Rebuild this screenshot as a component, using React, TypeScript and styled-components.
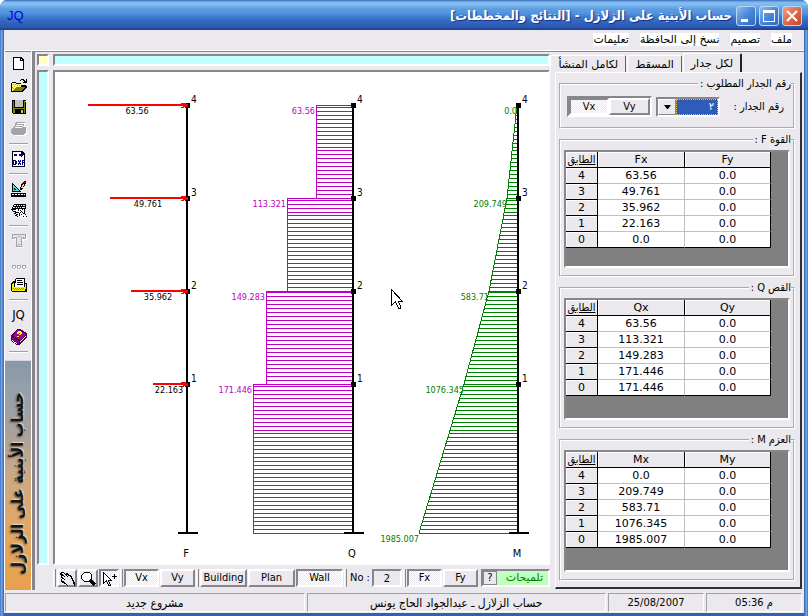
import React from "react";
import styled, { createGlobalStyle, css } from "styled-components";

const face = "#ebe9ed";
const shade = "#86868c";
const line = "#a0a0a6";
const cyan = "#c0ffff";
const violet = "#c000c0";
const green = "#008000";
const uiFont = '"DejaVu Sans Condensed", "DejaVu Sans", sans-serif';
const wideFont = '"DejaVu Sans", sans-serif';

const GlobalStyle = createGlobalStyle`
  * { box-sizing: border-box; }
  body { margin: 0; background: #fff; font: 11px/14px ${uiFont}; color: #000; }
  button, input, select { font: inherit; color: inherit; margin: 0; }
`;

const sunken = css`
  border: 2px solid;
  border-color: ${shade} #fff #fff ${shade};
`;
const dither = css`
  background: repeating-conic-gradient(#fff 0 25%, ${face} 0 50%) 0 0 / 2px 2px;
`;

const Window = styled.div`
  display: flex;
  flex-direction: column;
  min-height: 100vh;
  padding: 0 4px 4px;
  border-radius: 7px 7px 0 0;
  background: linear-gradient(90deg, #2450a8 0, #7cb0ea 1px, #4c80cc 3px, #3260b4 4px, #3260b4 calc(100% - 4px), #4c80cc calc(100% - 3px), #7cb0ea calc(100% - 1px), #2450a8 100%);
`;

const TitleBar = styled.header`
  display: flex;
  align-items: center;
  height: 30px;
  margin: 0 -4px;
  padding: 2px 6px 0 7px;
  border-radius: 7px 7px 0 0;
  background: linear-gradient(#3c6cb8 0, #78b4ec 2px, #86c0f0 4px, #5c9ce4 9px, #5494e0 13px, #3c7ccc 17px, #3468c0 21px, #2c58b0 27px, #1c3c90 30px);
`;
const AppMark = styled.span`
  color: #0000e8;
  font: 13px/16px "Liberation Sans", sans-serif;
`;
const Title = styled.h1`
  flex: 1;
  margin: 0 4px 0 0;
  color: #fff;
  font: bold 13px/20px ${uiFont};
  text-shadow: 1px 1px 1px #10308c;
`;
const WindowButtons = styled.div`
  display: flex;
  gap: 3px;
`;
const WindowButton = styled.button<{ $close?: boolean }>`
  display: grid;
  place-items: center;
  width: 20px;
  height: 20px;
  padding: 0;
  border: 1px solid #b8d8f8;
  border-radius: 3px;
  background: ${(p) =>
    p.$close
      ? "linear-gradient(135deg, #f0a088, #e06848 50%, #c84828)"
      : "linear-gradient(135deg, #90bcf0, #4888d8 50%, #3068c0)"};
`;

const MenuBar = styled.nav`
  display: flex;
  gap: 11px;
  height: 20px;
  padding: 3px 12px 0 0;
  background: ${face};
`;
const MenuItem = styled.button`
  height: 13px;
  padding: 0;
  border: 0;
  background: #fff;
  font: 11px/13px ${wideFont};
`;

const Body = styled.main`
  display: flex;
  flex: 1;
  background: ${face};
  border-top: 1px solid #fff;
  box-shadow: inset 0 1px 0 ${shade};
`;

const ToolColumn = styled.div`
  display: flex;
  flex-direction: column;
  width: 30px;
  padding-top: 1px;
  border-left: 1px solid #fff;
  border-right: 2px solid ${shade};
  box-shadow: inset -1px 0 0 #fff;
`;
const ToolButton = styled.button`
  display: grid;
  place-items: center;
  height: 22px;
  padding: 0;
  border: 0;
  background: none;
  font: 13px/16px ${uiFont};
`;
const ToolRule = styled.hr`
  width: 19px;
  height: 2px;
  margin: 3px auto;
  border: 0;
  border-top: 1px solid ${line};
  background: #fff;
`;
const Banner = styled.div`
  display: flex;
  flex: 1;
  align-items: center;
  justify-content: center;
  width: 26px;
  margin-top: 4px;
  padding-top: 16px;
  border-top: 1px solid #d8d8dc;
  background: linear-gradient(#8898a8 0, #94a0aa 12%, #a8a09c 30%, #c8a888 48%, #e0a868 70%, #e8a04c 100%);
`;
const BannerText = styled.span`
  writing-mode: vertical-rl;
  transform: rotate(180deg);
  white-space: nowrap;
  color: #141410;
  font: bold 16px/24px ${uiFont};
  text-shadow: -1px -1px 2px #504840, 1px 1px 1px #e8dccc;
`;

const Workspace = styled.section`
  display: grid;
  flex: 1;
  grid-template-columns: 12px minmax(0, 1fr);
  grid-template-rows: 12px minmax(0, 1fr) 18px;
  gap: 4px;
  min-width: 0;
  padding: 3px 5px 3px 2px;
  border-left: 1px solid ${shade};
`;
const Strip = styled.div<{ $color: string }>`
  ${sunken}
  background: ${(p) => p.$color};
`;
const Canvas = styled.div`
  ${sunken}
  display: flex;
  min-height: 494px;
  background: #fff;
`;
const Chart = styled.svg`
  flex: 1;
  align-self: stretch;
  min-width: 0;
  font: 9px ${uiFont};
`;

const Commands = styled.div`
  display: flex;
  grid-column: 2;
  gap: 1px;
  align-items: stretch;
`;
const Grip = styled.span`
  width: 3px;
  border-right: 1px solid ${shade};
  border-left: 1px solid #fff;
`;
const CommandButton = styled.button<{ $w: number; $on?: boolean }>`
  display: grid;
  place-items: center;
  width: ${(p) => p.$w}px;
  padding: 0;
  border: 2px solid;
  border-color: #fff ${shade} ${shade} #fff;
  background: ${face};
  ${(p) => p.$on && css`
    border-color: ${shade} #fff #fff ${shade};
    ${dither}
  `}
`;
const NumberLabel = styled.label`
  display: flex;
  align-items: center;
  gap: 2px;
  padding-left: 2px;
  white-space: nowrap;
`;
const NumberBox = styled.input`
  ${sunken}
  width: 30px;
  height: 18px;
  padding: 0;
  background: ${face};
  text-align: center;
`;
const Hint = styled.div`
  ${sunken}
  display: flex;
  flex: 1;
  margin-left: 2px;
  background: #c0ffc0;
  color: ${green};
`;
const HintButton = styled.button`
  width: 14px;
  padding: 0;
  border: 1px solid ${shade};
  background: ${face};
  color: #000;
  line-height: 12px;
`;
const HintText = styled.span`
  flex: 1;
  padding-right: 5px;
  font: 11px/14px ${wideFont};
  text-align: right;
`;

const Side = styled.aside`
  display: flex;
  flex-direction: column;
  width: 249px;
  padding: 2px 0 0;
`;
const Tabs = styled.div`
  display: flex;
  align-items: flex-end;
  gap: 1px;
  height: 19px;
  padding-right: 62px;
`;
const Tab = styled.button<{ $on?: boolean }>`
  height: ${(p) => (p.$on ? 19 : 17)}px;
  padding: 1px 7px 0;
  border: 0;
  border-top: 1px solid #fff;
  border-left: 1px solid #fff;
  border-right: ${(p) => (p.$on ? "2px solid #202020" : "1px solid #606060")};
  border-radius: 3px 2px 0 0;
  background: ${face};
  font: 11px/14px ${wideFont};
  white-space: nowrap;
`;
const Page = styled.div`
  display: flex;
  flex: 1;
  flex-direction: column;
  gap: 4px;
  margin: 0 2px 1px 0;
  padding: 4px 5px 6px 3px;
  border: solid;
  border-width: 1px 2px 2px 1px;
  border-color: #fff #303030 #303030 #fff;
`;
const Group = styled.fieldset`
  min-width: 0;
  margin: 0;
  padding: 3px 3px 7px;
  border: 2px groove #fff;
`;
const Caption = styled.legend`
  height: 14px;
  margin: 0 -1px;
  padding: 0 0 0 2px;
  white-space: nowrap;
`;
const WallRow = styled.div`
  display: flex;
  align-items: center;
  padding: 2px 6px 3px 3px;
  white-space: nowrap;
`;
const ComboLabel = styled.label`
  flex: 1;
`;
const Combo = styled.div`
  ${sunken}
  display: flex;
  width: 64px;
  height: 20px;
  direction: ltr;
`;
const ComboArrow = styled.span`
  display: grid;
  place-items: center;
  width: 18px;
  border: 1px solid;
  border-color: #fff ${shade} ${shade} #fff;
`;
const ComboSelect = styled.select`
  flex: 1;
  min-width: 0;
  padding: 0 3px;
  appearance: none;
  border: 1px dotted #e8c060;
  border-radius: 0;
  background: #2f5cb8;
  color: #fff;
  direction: rtl;
`;
const PairFrame = styled.div`
  ${sunken}
  display: flex;
  width: 85px;
  height: 21px;
  margin-right: 4px;
  direction: ltr;
`;
const GridFrame = styled.div<{ $h: number }>`
  ${sunken}
  height: ${(p) => p.$h}px;
  background: #808080;
  direction: ltr;
`;
const Table = styled.table`
  width: 205px;
  border-collapse: separate;
  border-spacing: 0;
  table-layout: fixed;
  text-align: center;
  font: 11px/15px ${wideFont};
`;
const HeadCell = styled.th<{ $w?: number }>`
  width: ${(p) => (p.$w ? p.$w + "px" : "auto")};
  height: 16px;
  padding: 0;
  border-right: 1px solid #000;
  border-bottom: 1px solid #000;
  background: ${face};
  box-shadow: inset 1px 1px 0 #fff;
  font-weight: normal;
`;
const FloorHead = styled.span`
  font: 11px/14px ${uiFont};
  text-decoration: underline;
`;
const Cell = styled.td<{ $end?: boolean; $last?: boolean }>`
  height: 16px;
  padding: 0;
  border-right: 1px solid ${(p) => (p.$end ? "#000" : "#c0c0c0")};
  border-bottom: 1px solid ${(p) => (p.$last ? "#000" : "#c0c0c0")};
  background: #fff;
`;

const StatusBar = styled.footer`
  display: flex;
  gap: 2px;
  padding: 3px 2px 1px 1px;
  background: ${face};
  text-align: center;
`;
const Pane = styled.div<{ $w?: number }>`
  flex: ${(p) => (p.$w ? `0 0 ${p.$w}px` : "1")};
  padding: 1px 0 0;
  border: 1px solid;
  border-color: ${line} #fff #fff ${line};
  font-size: ${(p) => (p.$w ? 11 : 12)}px;
  line-height: 16px;
`;

const Icon = ({ children, size = 16 }: { children: React.ReactNode; size?: number }) => (
  <svg width={size} height={size} viewBox={`0 0 ${size} ${size}`} shapeRendering="crispEdges" aria-hidden="true">
    {children}
  </svg>
);

const NewIcon = () => (
  <Icon>
    <path d="M2 2h8l3 3v10H2z" fill="#000" />
    <path d="M3 3h6v3h3v8H3z" fill="#fff" />
    <path d="M10 4h1v1h-1z" fill="#fff" />
  </Icon>
);
const OpenIcon = () => (
  <Icon>
    <path d="M0 6h1V5h4v1h5v2h5v1h1v1l-5 5H0z" fill="#000" />
    <path d="M1 6h4v1h5v3H5l-4 4z" fill="#ffff80" />
    <path d="M2 7h1v1H2zM4 7h1v1H4zM6 8h1v1H6zM8 8h1v1H8zM3 9h1v1H3zM1 10h1v1H1zM2 11h1v1H2z" fill="#c0a000" />
    <path d="M5 10h9l-4 4H2z" fill="#808000" />
    <path d="M9 3h1V2h3v1h1v1h1V2h1v4h-4V5h1V4h-1V3h-2v1H9z" fill="#000" />
  </Icon>
);
const SaveIcon = () => (
  <Icon>
    <path d="M1 1h14v14H2l-1-1z" fill="#000" />
    <path d="M2 2h12v12H2z" fill="#808000" />
    <path d="M4 1h8v7H4z" fill="#c0c0c0" />
    <path d="M3 2h1v6h8V2h1v7H3zM4 10h9v5H4z" fill="#000" />
    <path d="M10 11h2v3h-2z" fill="#c0c0c0" />
    <path d="M14 2h1v1h-1z" fill="#fff" />
  </Icon>
);
const PrintIcon = () => (
  <Icon>
    <path d="M5 2h10l-2 5h2l1 1v5l-3 2H3l-3-3V9l3-2z" fill="#fff" />
    <path d="M5 1h9l-2 5h2l1 1v4l-3 3H3l-3-2V8l3-2z" fill="#a4a4a8" />
    <path d="M6 2h7l-1 1H6zM5 4h7v1H5zM4 6h7v1H4z" fill="#fff" />
  </Icon>
);
const DxfIcon = () => (
  <Icon>
    <path d="M1 0h10l3 3v13H1z" fill="#000" />
    <path d="M2 1h8v3h3v11H2z" fill="#fff" />
    <path d="M2 4l2-2v1h2v2H4v1zM12 4l-2-2v1H8v2h2v1zM3 9h2v1h1v3H5v1H2V9zM3 10v3h1v-3zM7 9h1v1h1V9h1v2H9v1h1v2H9v-1H8v1H7v-2h1v-1H7zM11 9h3v1h-2v1h1v1h-1v2h-1z" fill="#000090" fillRule="evenodd" />
  </Icon>
);
const DraftIcon = () => (
  <Icon>
    <path d="M1 1l9 10H1z" fill="#000" />
    <path d="M2 4l6 6H2z" fill="#40e0e0" />
    <path d="M3 7l2 2H3z" fill="#000" />
    <path d="M0 12h15v4H0z" fill="#000" />
    <path d="M1 13h13v1H1z" fill="#fff" />
    <path d="M3 13h1v1H3zM6 13h1v1H6zM9 13h1v1H9zM12 13h1v1h-1z" fill="#000" />
    <path d="M9 9V7l2-5 2-2h2v2l-4 7z" fill="#000" />
    <path d="M10 7l2-4h1v1l-2 4z" fill="#ffe840" />
    <path d="M13 1h2v1h-2z" fill="#900" />
  </Icon>
);
const SectionIcon = () => (
  <Icon>
    <path d="M3 1h12v5H1V4h1V2h1z" fill="#000" />
    <path d="M3 2h2v1H3zM6 2h1v1H6zM8 2h1v1H8zM10 2h1v1h-1zM12 2h2v1h-2zM2 4h2v1H2zM5 4h1v1H5zM7 4h1v1H7zM9 4h1v1H9zM11 4h3v1h-3z" fill="#ffffa0" />
    <path d="M2 6h12v7h2v2h-4l-8-4z" fill="#fff" />
    <path d="M0 6h5v1H0zM1 7h1v1h3v1H2V8H1zM4 9h4v1H4zM3 10h2v1H3zM5 11h2v1H5zM4 12h2v1H4zM6 13h1v1H6zM8 10h1v3H8zM7 6h1v2H7zM9 7h1v1H9zM10 8h1v1h-1zM9 9h1v1H9zM11 9h1v1h-1zM10 11h1v1h-1zM12 10h1v1h-1zM13 6h1v5h-1zM14 11h1v1h-1zM12 13h1v1h-1zM15 13h1v1h-1zM11 6h1v1h-1z" fill="#000" />
  </Icon>
);
const TextIcon = () => (
  <Icon>
    <path d="M2 2h14v5h-3v1h-2v7H6V8H4V7H2z" fill="#fff" />
    <path d="M1.5 1.5h13v4h-2v-1h-2v9h-5v-9h-2v1h-2z" fill="#e4e4e8" stroke="#a4a4a8" />
    <path d="M7 3h2v1H7zM7 11h2v1H7z" fill="#a4a4a8" />
  </Icon>
);
const DotsIcon = () => (
  <Icon>
    {[1, 6, 11].map((x) => (
      <g key={x}>
        <path d={`M${x + 1} 11h3v4h-3z`} fill="#fff" />
        <path d={`M${x} 10h4v1h-4zM${x} 11h1v2h-1zM${x + 3} 11h1v2h-1zM${x + 1} 13h2v1h-2z`} fill="#a4a4a8" />
      </g>
    ))}
  </Icon>
);
const ReportIcon = () => (
  <Icon>
    <path d="M5 1h9v5h2v8l-1 1H1l-1-1V7l2-3h2z" fill="#000" />
    <path d="M5 2h8v8H4z" fill="#fff" />
    <path d="M6 3h5v1H6zM6 5h6v1H6zM6 7h6v1H6z" fill="#000" />
    <path d="M1 7l2-2v5h11V7h1v3l-1 4H1z" fill="#f4f000" />
    <path d="M2 11h1v1H2zM4 11h1v1H4zM6 11h1v1H6zM8 11h1v1H8zM10 11h1v1h-1zM12 11h1v1h-1zM3 12h1v1H3zM5 12h1v1H5zM7 12h1v1H7zM9 12h1v1H9zM11 12h1v1h-1z" fill="#908800" />
  </Icon>
);
const BookIcon = () => (
  <Icon>
    <path d="M6 0h3l7 4v4l-7 8H6L0 12V7z" fill="#400040" />
    <path d="M6 1h2l7 4-6 6-7-4z" fill="#a000a0" />
    <path d="M1 8l7 4v3l-7-4z" fill="#800080" />
    <path d="M9 13l6-7v1l-6 7zM1 11l6 4H6l-5-3z" fill="#fff" />
    <path d="M7 2h3v1h1v2h-1v1H8V5h1V4H8v1H6V3h1zM6 7h2v1H6z" fill="#ffff00" />
  </Icon>
);
const HandIcon = () => (
  <Icon>
    <path
      d="M2 1h3v1h1v1h1V2h2v1h1v1h2v1h1v2h1v2h1v2h1v4h-1v-2h-1v-3h-1V8h-1V6h-1V5H9V4H8v1h1v1H8V5H7V4H6V3H5V2H3v1h1v1h1v1h1v1H5V5H3v1h1v1h1v1h1v1H5V8H3v2h2v1h1v1h1v1h1v1h1v1H8v-1H7v-1H5v-1H3v-1H2V8h1V7H2V4H1V2h1z"
      fill="#000"
    />
  </Icon>
);
const LensIcon = () => (
  <Icon>
    <path d="M4 1h5l3 3v4l-3 3H4L1 8V4z" fill="#000" />
    <path d="M4 2h5l2 2v4l-2 2H4L2 8V4z" fill="#fff" />
    <path d="M10 9l5 5" stroke="#000" strokeWidth="3" />
  </Icon>
);
const pointer = "M.5.5v16l4-4 3 7h2v-2l-2-5h4z";
const PickIcon = () => (
  <Icon>
    <path d="M2.5 1.5v11l3-3 2 5h2l-2-5h3z" fill="#fff" stroke="#000" />
    <path d="M11 5h5v1h-5zM13 3h1v5h-1z" fill="#000" />
  </Icon>
);

const range = (from: number, to: number) => {
  const out: number[] = [];
  for (let y = from; y <= to; y += 4) out.push(y);
  return out;
};
const hatch = [
  105,
  ...range(107, 147),
  ...range(150, 198),
  ...range(200, 212),
  ...range(215, 291),
  ...range(292, 384),
  ...range(386, 430),
  ...range(433, 533),
];

const floors = [
  { n: 4, y: 105, force: "63.56", tail: 88, fx: 137, shear: "63.56", qx: 316, moment: "0.0", mx: 517 },
  { n: 3, y: 198, force: "49.761", tail: 110, fx: 148, shear: "113.321", qx: 287, moment: "209.749", mx: 507 },
  { n: 2, y: 291, force: "35.962", tail: 131, fx: 158, shear: "149.283", qx: 266, moment: "583.71", mx: 489 },
  { n: 1, y: 384, force: "22.163", tail: 153, fx: 169, shear: "171.446", qx: 253, moment: "1076.345", mx: 464 },
];
const base = { y: 533, qx: 253, mx: 419 };

const shearLeft = (y: number) => [...floors].reverse().find((f) => y >= f.y)!.qx;
const momentLeft = (y: number) => {
  const pts = [...floors, base];
  const i = Math.max(1, pts.findIndex((p) => p.y >= y));
  const a = pts[i - 1];
  const b = pts[i];
  return Math.round(a.mx + ((b.mx - a.mx) * (y - a.y)) / (b.y - a.y));
};

const Column = ({ x, name }: { x: number; name: string }) => (
  <g>
    <path d={`M${x - 1} 105h2v427h-2zM${x - 9} 532h20v2h-20z`} />
    {floors.map((f) => (
      <g key={f.n}>
        <rect x={x - 2} y={f.y - 2} width="5" height="5" />
        <text x={x + 4} y={f.y - 2} fontSize="10">{f.n}</text>
      </g>
    ))}
    <text x={x - 1} y="557" textAnchor="middle" fontSize="11">{name}</text>
  </g>
);

const Diagrams = () => (
  <Chart shapeRendering="crispEdges" role="img" aria-label="F, Q, M">
    <g transform="translate(-55 -72)">
      <g fill={violet}>
        {hatch.map((y) => (
          <rect key={y} x={shearLeft(y)} y={y} width={353 - shearLeft(y)} height="1" />
        ))}
        {floors.map((f, i) => (
          <rect key={f.n} x={f.qx} y={f.y} width="1" height={(floors[i + 1] ?? base).y - f.y + 1} />
        ))}
        {floors.map((f) => (
          <text key={f.n} x={f.qx - 1} y={f.y + 9} textAnchor="end">{f.shear}</text>
        ))}
      </g>
      <g fill={green}>
        {hatch.map((y) => (
          <rect key={y} x={momentLeft(y)} y={y} width={518 - momentLeft(y)} height="1" />
        ))}
        <polyline
          points={[...floors, base].map((p) => `${p.mx},${p.y}`).join(" ")}
          fill="none"
          stroke={green}
        />
        {floors.map((f) => (
          <text key={f.n} x={f.mx} y={f.y + 9} textAnchor="end">{f.moment}</text>
        ))}
        <text x="419" y="542" textAnchor="end">1985.007</text>
      </g>
      <Column x={187} name="F" />
      <Column x={353} name="Q" />
      <Column x={518} name="M" />
      {floors.map((f) => (
        <g key={f.n}>
          <path d={`M${f.tail} ${f.y - 1}H181v-1h5v1h2v3h-4v1h-3v-1h2v-1H${f.tail}z`} fill="#f00" />
          <text x={f.fx} y={f.y + 9} textAnchor="middle">{f.force}</text>
        </g>
      ))}
      <path d={pointer} transform="translate(391 289)" fill="#fff" stroke="#000" />
    </g>
  </Chart>
);

const tables = [
  { title: "القوة F :", key: "F", h: 118, rows: ["63.56", "49.761", "35.962", "22.163", "0.0"] },
  { title: "القص Q :", key: "Q", h: 122, rows: ["63.56", "113.321", "149.283", "171.446", "171.446"] },
  { title: "العزم M :", key: "M", h: 122, rows: ["0.0", "209.749", "583.71", "1076.345", "1985.007"] },
];

export default function App() {
  return (
    <Window>
      <GlobalStyle />
      <TitleBar>
        <AppMark>JQ</AppMark>
        <Title dir="rtl">حساب الأبنية على الزلازل - [النتائج والمخططات]</Title>
        <WindowButtons>
          <WindowButton aria-label="Minimize">
            <Icon><path d="M3 11h7v3H3z" fill="#fff" /></Icon>
          </WindowButton>
          <WindowButton aria-label="Maximize">
            <Icon><path d="M2 2h12v12H2zM3 5v8h10V5z" fill="#fff" fillRule="evenodd" /></Icon>
          </WindowButton>
          <WindowButton $close aria-label="Close">
            <svg width="16" height="16" viewBox="0 0 16 16" aria-hidden="true">
              <path d="M3 3l10 10M13 3L3 13" stroke="#fff" strokeWidth="2" />
            </svg>
          </WindowButton>
        </WindowButtons>
      </TitleBar>
      <MenuBar dir="rtl">
        {["ملف", "تصميم", "نسخ إلى الحافظة", "تعليمات"].map((t) => (
          <MenuItem key={t}>{t}</MenuItem>
        ))}
      </MenuBar>
      <Body>
        <ToolColumn>
          <ToolButton aria-label="New"><NewIcon /></ToolButton>
          <ToolButton aria-label="Open"><OpenIcon /></ToolButton>
          <ToolButton aria-label="Save"><SaveIcon /></ToolButton>
          <ToolButton aria-label="Print" disabled><PrintIcon /></ToolButton>
          <ToolRule />
          <ToolButton aria-label="Export DXF"><DxfIcon /></ToolButton>
          <ToolRule />
          <ToolButton aria-label="Draft"><DraftIcon /></ToolButton>
          <ToolButton aria-label="Section"><SectionIcon /></ToolButton>
          <ToolRule />
          <ToolButton aria-label="Text" disabled><TextIcon /></ToolButton>
          <ToolButton aria-label="Supports" disabled><DotsIcon /></ToolButton>
          <ToolButton aria-label="Report"><ReportIcon /></ToolButton>
          <ToolRule />
          <ToolButton>JQ</ToolButton>
          <ToolButton aria-label="Help"><BookIcon /></ToolButton>
          <ToolRule />
          <Banner>
            <BannerText dir="rtl">حساب الأبنية على الزلازل</BannerText>
          </Banner>
        </ToolColumn>
        <Workspace>
          <Strip $color="#ffffc0" />
          <Strip $color={cyan} />
          <Strip $color={cyan} />
          <Canvas><Diagrams /></Canvas>
          <Commands>
            <Grip />
            <CommandButton $w={20} aria-label="Pan"><HandIcon /></CommandButton>
            <CommandButton $w={20} aria-label="Zoom"><LensIcon /></CommandButton>
            <CommandButton $w={20} $on aria-label="Pick"><PickIcon /></CommandButton>
            <Grip />
            <CommandButton $w={35} $on>Vx</CommandButton>
            <CommandButton $w={35}>Vy</CommandButton>
            <Grip />
            <CommandButton $w={47}>Building</CommandButton>
            <CommandButton $w={47}>Plan</CommandButton>
            <CommandButton $w={47} $on>Wall</CommandButton>
            <Grip />
            <NumberLabel>
              No :
              <NumberBox defaultValue="2" />
            </NumberLabel>
            <Grip />
            <CommandButton $w={35} $on>Fx</CommandButton>
            <CommandButton $w={35}>Fy</CommandButton>
            <Hint>
              <HintButton>?</HintButton>
              <HintText>تلميحات</HintText>
            </Hint>
          </Commands>
        </Workspace>
        <Side>
          <Tabs dir="rtl" role="tablist">
            <Tab $on role="tab" aria-selected="true">لكل جدار</Tab>
            <Tab role="tab" aria-selected="false">المسقط</Tab>
            <Tab role="tab" aria-selected="false">لكامل المنشأ</Tab>
          </Tabs>
          <Page dir="rtl">
            <Group>
              <Caption>رقم الجدار المطلوب :</Caption>
              <WallRow>
                <ComboLabel htmlFor="wall">رقم الجدار :</ComboLabel>
                <Combo>
                  <ComboArrow>
                    <svg width="7" height="4" viewBox="0 0 7 4" aria-hidden="true"><path d="M0 0h7L4 4H3z" /></svg>
                  </ComboArrow>
                  <ComboSelect id="wall" defaultValue="2">
                    <option value="2">٢</option>
                  </ComboSelect>
                </Combo>
                <PairFrame>
                  <CommandButton $w={40} $on>Vx</CommandButton>
                  <CommandButton $w={41}>Vy</CommandButton>
                </PairFrame>
              </WallRow>
            </Group>
            {tables.map((t) => (
              <Group key={t.key}>
                <Caption>{t.title}</Caption>
                <GridFrame $h={t.h}>
                  <Table>
                    <thead>
                      <tr>
                        <HeadCell $w={32}><FloorHead>الطابق</FloorHead></HeadCell>
                        <HeadCell $w={87}>{t.key}x</HeadCell>
                        <HeadCell>{t.key}y</HeadCell>
                      </tr>
                    </thead>
                    <tbody>
                      {t.rows.map((v, i) => (
                        <tr key={i}>
                          <HeadCell scope="row">{4 - i}</HeadCell>
                          <Cell $last={i === 4}>{v}</Cell>
                          <Cell $end $last={i === 4}>0.0</Cell>
                        </tr>
                      ))}
                    </tbody>
                  </Table>
                </GridFrame>
              </Group>
            ))}
          </Page>
        </Side>
      </Body>
      <StatusBar>
        <Pane>مشروع جديد</Pane>
        <Pane>حساب الزلازل ـ عبدالجواد الحاج يونس</Pane>
        <Pane $w={96}>25/08/2007</Pane>
        <Pane $w={96}>05:36 م</Pane>
      </StatusBar>
    </Window>
  );
}
